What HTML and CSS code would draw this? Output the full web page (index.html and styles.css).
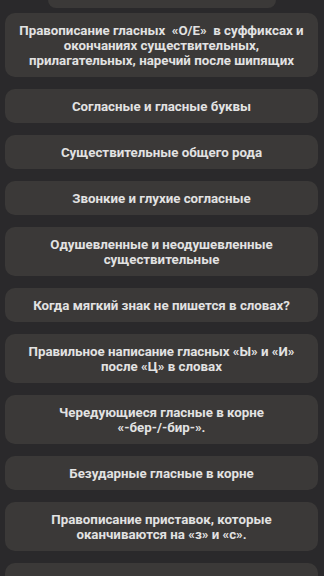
FILE: index.html
```html
<!DOCTYPE html>
<html lang="ru">
<head>
<meta charset="utf-8">
<link rel="stylesheet" href="styles.css">
</head>
<body>
<div class="page">
  <div class="top-tab"></div>
  <ul class="list">
    <li class="card">Правописание гласных&nbsp; «О/Е»&nbsp; в суффиксах и окончаниях существительных, прилагательных, наречий после шипящих</li>
    <li class="card">Согласные и гласные буквы</li>
    <li class="card">Существительные общего рода</li>
    <li class="card">Звонкие и глухие согласные</li>
    <li class="card">Одушевленные и неодушевленные существительные</li>
    <li class="card">Когда мягкий знак не пишется в словах?</li>
    <li class="card">Правильное написание гласных «Ы» и «И» после «Ц» в словах</li>
    <li class="card">Чередующиеся гласные в корне<br>«-бер-/-бир-».</li>
    <li class="card">Безударные гласные в корне</li>
    <li class="card">Правописание приставок, которые<br>оканчиваются на «з» и «с».</li>
    <li class="card card-empty"></li>
  </ul>
</div>
</body>
</html>
```
FILE: styles.css
```css
html, body {
  margin: 0;
  padding: 0;
  background: #2a292b;
}
body {
  width: 324px;
  height: 576px;
  overflow: hidden;
  font-family: Roboto, "Noto Sans", sans-serif;
}
.page {
  padding: 0 6px 0 5px;
}
.top-tab {
  width: 228px;
  height: 8px;
  margin: 0 0 5px 43px;
  background: #3b3938;
  border-radius: 0 0 10px 10px;
}
.list {
  list-style: none;
  margin: 0;
  padding: 0;
  display: flex;
  flex-direction: column;
  gap: 12px;
}
.card {
  background: #3b3938;
  border-radius: 10px;
  padding: 9.5px 12px;
  color: #e2e2e2;
  font-weight: 700;
  font-size: 13.3px;
  line-height: 15px;
  text-align: center;
}
.card-empty {
  height: 30px;
}
```
